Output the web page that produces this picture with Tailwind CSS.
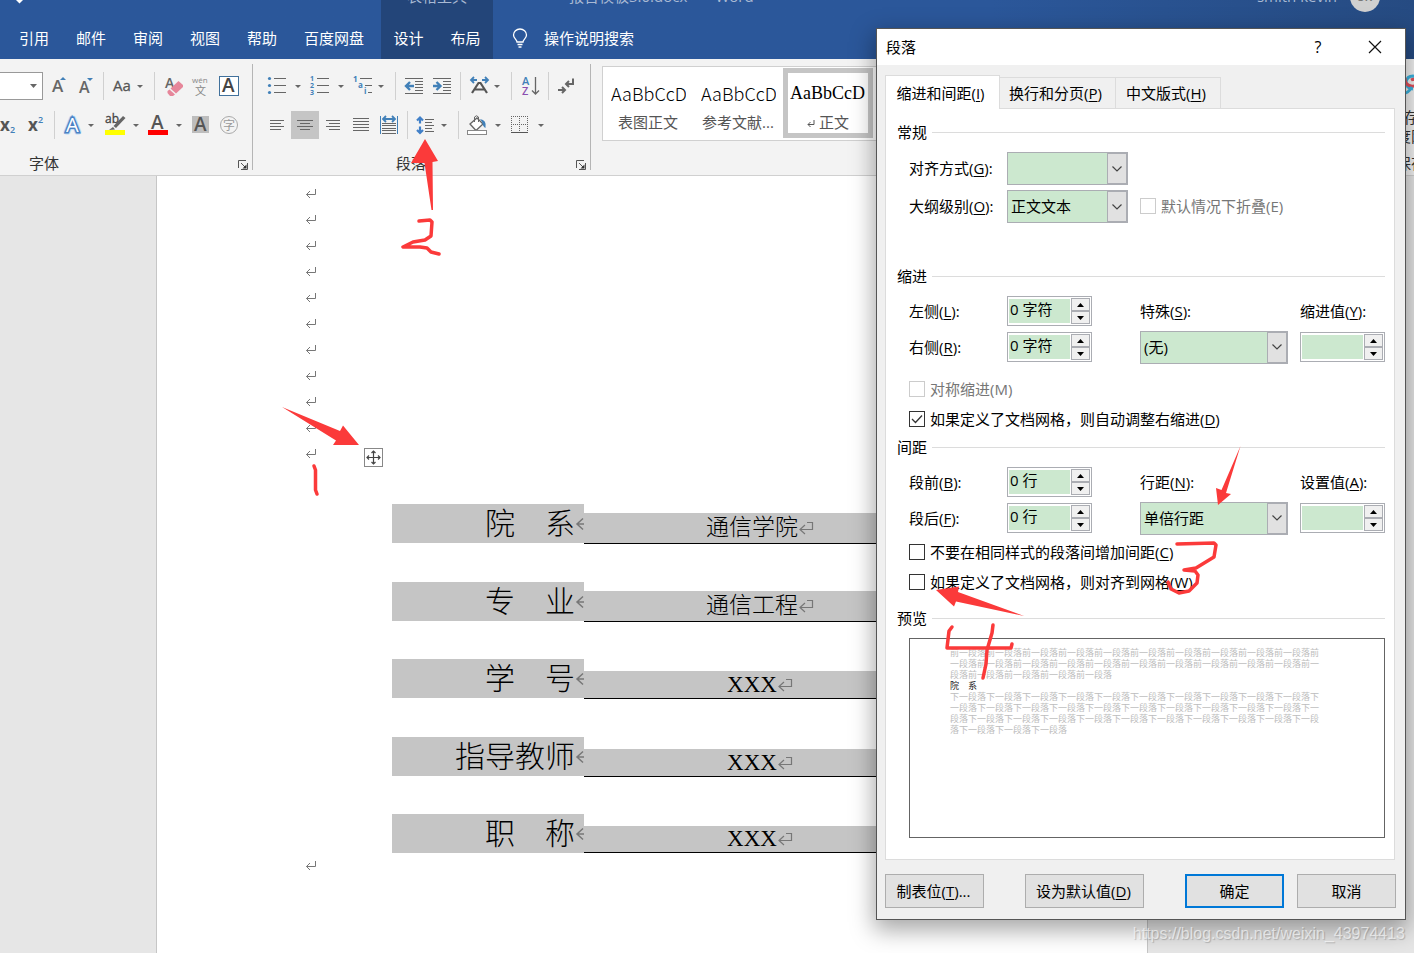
<!DOCTYPE html>
<html lang="zh-CN">
<head>
<meta charset="utf-8">
<title>报告模板3.0.docx - Word</title>
<script src="https://cdn.jsdelivr.net/npm/@tailwindcss/browser@4"></script>
</head>
<body class="relative flex h-screen flex-col overflow-hidden bg-[#e6e6e6] font-['Open_Sans','Noto_Sans_CJK_SC',sans-serif] text-[15px] leading-5 text-black">

<svg class="hidden" aria-hidden="true">
  <defs>
    <symbol id="mark" viewBox="0 0 12 12"><path d="M10.500 1V6.500H1.500M5 3L1.500 6.500L5 10" fill="none" stroke="#777" stroke-width="1"/></symbol>
    <symbol id="cellmark" viewBox="0 0 16 16"><path d="M9 2.500H14.500V9.500H2M7 5L2 9.500L7 14" fill="none" stroke="#777" stroke-width="1.200"/></symbol>
    <symbol id="cutmark" viewBox="0 0 9 16"><path d="M9 8H2M8 2.500L2 8L8 13.500" fill="none" stroke="#777" stroke-width="1.500"/></symbol>
    <symbol id="launcher" viewBox="0 0 10 10"><path d="M.500 8V.500H8M3 3L8 8M9.500 3V9.500H3" fill="none" stroke="#555"/><path d="M8.500 4.500V8.500H4.500Z" fill="#333"/></symbol>
    <symbol id="chev" viewBox="0 0 10 6"><path d="M.500 .500L5 5L9.500 .500" fill="none" stroke="#444" stroke-width="1.200"/></symbol>
    <symbol id="up" viewBox="0 0 7 4"><path d="M0 4L3.500 0L7 4Z"/></symbol>
    <symbol id="down" viewBox="0 0 7 4"><path d="M0 0L3.500 4L7 0Z"/></symbol>
  </defs>
</svg>

<header class="flex h-[59px] shrink-0 overflow-hidden bg-[#2b579a] bg-linear-to-r from-[#2b579a] from-70% to-[#264b82] text-white">
  <div class="flex w-[381px] flex-col">
    <div class="h-[18px] pl-[16px]"><svg class="h-1 w-[7px]" viewBox="0 0 7 4"><path d="M0 0H7L3.500 3.500Z" fill="#fff"/></svg></div>
    <nav class="flex gap-[27px] whitespace-nowrap pt-[10px] pl-[19px]">
      <a href="#">引用</a><a href="#">邮件</a><a href="#">审阅</a><a href="#">视图</a><a href="#">帮助</a><a href="#">百度网盘</a>
    </nav>
  </div>
  <div class="flex w-[112px] flex-col items-center bg-[#234579]">
    <div class="-mt-[14px] h-8 text-[#a9b9d3]">表格工具</div>
    <nav class="flex gap-[27px] pt-[10px]"><a href="#">设计</a><a href="#">布局</a></nav>
  </div>
  <div class="flex flex-1 flex-col">
    <div class="-mt-[14px] flex h-8 pr-[34px] pl-[76px] text-[#a9b9d3]">
      <span class="whitespace-pre">报告模板3.0.docx   -   Word</span>
      <span class="ml-auto">smith kevin</span>
      <span class="-mt-1 ml-[13px] size-[30px] rounded-full bg-[#d0d0d0] pt-[5px] text-center text-xs leading-5 font-semibold text-[#777]">SK</span>
    </div>
    <label class="flex items-center pt-[10px] pl-[19px]">
      <svg class="mr-[16px] h-5 w-4" viewBox="0 0 16 20" fill="none" stroke="#fff" stroke-width="1.300"><path d="M5 14C5 11.500 1.500 10.500 1.500 7A6.500 6 0 0 1 14.500 7C14.500 10.500 11 11.500 11 14ZM5.500 16.500H10.500M6.500 19H9.500"/></svg>
      <input class="w-40 bg-transparent text-[15px] leading-5 outline-none placeholder:text-white" placeholder="操作说明搜索" aria-label="操作说明搜索">
    </label>
  </div>
</header>

<section class="flex h-[117px] shrink-0 overflow-hidden border-b border-[#d0d0d0] bg-[#f3f3f3]" aria-label="功能区">
  <!-- 字体 -->
  <div class="relative flex w-[253px] shrink-0 flex-col pt-[13px]">
    <div class="flex h-7">
      <button aria-label="字号" class="flex w-[43px] items-center justify-end border border-l-0 border-[#999] bg-white pr-[5px]"><svg class="h-1 w-[7px] fill-[#666]"><use href="#down"/></svg></button>
      <button aria-label="增大字号"><svg width="29" height="28" viewBox="43 72 29 28"><text x="52" y="92" font-size="17" font-weight="600" fill="#666">A</text><path d="M60 80L63 77L66 80Z" fill="#4180b8"/></svg></button>
      <button aria-label="减小字号"><svg width="27" height="28" viewBox="72 72 27 28"><text x="79" y="93" font-size="16" font-weight="600" fill="#666">A</text><path d="M87 78H93L90 81Z" fill="#4180b8"/></svg></button>
      <span class="mx-1 w-px bg-[#d0d0d0]"></span>
      <button aria-label="更改大小写"><svg width="42" height="28" viewBox="108 72 42 28"><text x="113" y="91" font-size="15" fill="#555" stroke="#555" stroke-width=".3">Aa</text><path d="M137 85H143L140 88Z" fill="#666"/></svg></button>
      <span class="mx-1 w-px bg-[#d0d0d0]"></span>
      <button aria-label="清除格式"><svg width="28" height="28" viewBox="159 72 28 28"><text x="165" y="88" font-size="14" font-weight="600" fill="#666">A</text><path d="M178.500 81L183 85V87L176 93.500L170.500 88.500Z" fill="#e6869a"/><path d="M169.500 89.500L175 94.500L173 96H170L167.500 93V91Z" fill="#e6869a"/></svg></button>
      <button aria-label="拼音指南"><svg width="27" height="28" viewBox="187 72 27 28"><text x="192" y="83" font-size="8" fill="#888">wén</text><text x="195" y="95" font-size="11" fill="#888">文</text></svg></button>
      <button aria-label="字符边框"><svg width="30" height="28" viewBox="214 72 30 28"><rect x="219.500" y="76.500" width="19" height="19" fill="#fff" stroke="#41719c"/><text x="222" y="92" font-size="19" font-weight="600" fill="#444">A</text></svg></button>
    </div>
    <div class="mt-[11px] flex h-7">
      <button aria-label="下标"><svg width="22" height="28" viewBox="0 111 22 28"><text x="0" y="131" font-size="17" font-weight="700" fill="#555">x</text><text x="10" y="133" font-size="9" font-weight="600" fill="#4180b8">2</text></svg></button>
      <button aria-label="上标"><svg width="28" height="28" viewBox="22 111 28 28"><text x="28" y="131" font-size="17" font-weight="700" fill="#555">x</text><text x="38" y="123" font-size="9" font-weight="600" fill="#4180b8">2</text></svg></button>
      <span class="mx-1 w-px bg-[#d0d0d0]"></span>
      <button aria-label="文本效果"><svg width="40" height="28" viewBox="59 111 40 28"><text x="66" y="132" font-size="20" fill="#cfe0f5" stroke="#c4dcf5" stroke-width="5" stroke-linejoin="round">A</text><text x="66" y="132" font-size="20" fill="#fff" stroke="#4a82c4" stroke-width="3" paint-order="stroke">A</text><path d="M88 124H94L91 127Z" fill="#666"/></svg></button>
      <button aria-label="突出显示"><svg width="44" height="28" viewBox="99 111 44 28"><text x="105" y="123" font-size="12" fill="#444" stroke="#444" stroke-width=".3">ab</text><path d="M123 116L125.500 118L116 128L113.500 126Z" fill="#666"/><path d="M113 127L115 129.500L109 130Z" fill="#666"/><rect x="105" y="130" width="20" height="5" fill="#ff0"/><path d="M133 124H139L136 127Z" fill="#666"/></svg></button>
      <button aria-label="字体颜色"><svg width="43" height="28" viewBox="143 111 43 28"><text x="151" y="129" font-size="19" font-weight="600" fill="#555">A</text><rect x="148" y="130" width="20" height="5" fill="red"/><path d="M176 124H182L179 127Z" fill="#666"/></svg></button>
      <button aria-label="字符底纹"><svg width="28" height="28" viewBox="186 111 28 28"><rect x="192" y="116" width="17" height="17" fill="#bdbdbd"/><text x="194" y="131" font-size="19" font-weight="600" fill="#555">A</text></svg></button>
      <button aria-label="带圈字符"><svg width="30" height="28" viewBox="214 111 30 28"><circle cx="229" cy="125" r="8.500" fill="none" stroke="#aaa"/><text x="223" y="129.500" font-size="12" fill="#999">字</text></svg></button>
    </div>
    <div class="mt-[14px] flex items-center justify-between pr-[5px] pl-[29px]"><span class="text-[#333]">字体</span><button aria-label="字体设置"><svg class="mt-1 size-[10px]"><use href="#launcher"/></svg></button></div>
    <span class="absolute top-[5px] right-0 h-[106px] w-px bg-[#b5b5b5]"></span>
  </div>

  <!-- 段落 -->
  <div class="relative flex w-[338px] shrink-0 flex-col pt-[13px]">
    <div class="flex h-7 pl-[9px]">
      <button aria-label="项目符号"><svg width="43" height="28" viewBox="262 72 43 28"><g fill="#4180b8"><circle cx="269.500" cy="78.500" r="1.600"/><circle cx="269.500" cy="85.500" r="1.600"/><circle cx="269.500" cy="92.500" r="1.600"/></g><path d="M274 78.500H286M274 85.500H286M274 92.500H286" stroke="#666"/><path d="M295 85H301L298 88Z" fill="#666"/></svg></button>
      <button aria-label="编号"><svg width="43" height="28" viewBox="305 72 43 28"><g fill="#4180b8" font-size="7" font-weight="700"><text x="310" y="81">1</text><text x="310" y="88">2</text><text x="310" y="95">3</text></g><path d="M317 78.500H329M317 85.500H329M317 92.500H329" stroke="#666"/><path d="M338 85H344L341 88Z" fill="#666"/></svg></button>
      <button aria-label="多级列表"><svg width="43" height="28" viewBox="348 72 43 28"><g fill="#4180b8" font-size="8" font-weight="700"><text x="353" y="82">1</text><text x="358" y="88">a</text><text x="364" y="94">i</text></g><path d="M360 78.500H372M365 85.500H372M368 92.500H372" stroke="#666"/><path d="M378 85H384L381 88Z" fill="#666"/></svg></button>
      <span class="mx-1 w-px bg-[#d0d0d0]"></span>
      <button aria-label="减少缩进"><svg width="28" height="28" viewBox="400 72 28 28"><path d="M405 78.500H423M415 81.500H423M415 84.500H423M415 87.500H423M415 90.500H423M405 93.500H423" stroke="#666"/><path d="M414 86H407M410 82L406 86L410 90" fill="none" stroke="#4180b8" stroke-width="2.400"/></svg></button>
      <button aria-label="增加缩进"><svg width="28" height="28" viewBox="428 72 28 28"><path d="M433 78.500H451M443 81.500H451M443 84.500H451M443 87.500H451M443 90.500H451M433 93.500H451" stroke="#666"/><path d="M433 86H440M436.500 82L440.500 86L436.500 90" fill="none" stroke="#4180b8" stroke-width="2.400"/></svg></button>
      <span class="mx-1 w-px bg-[#d0d0d0]"></span>
      <button aria-label="中文版式"><svg width="42" height="28" viewBox="465 72 42 28"><path d="M472 93L478.500 83H480.500L487 93M475 89.500H484" fill="none" stroke="#555" stroke-width="2.200"/><path d="M477 80H471M474 77L471 80L474 83M482 80H488M485 77L488 80L485 83" fill="none" stroke="#4180b8" stroke-width="1.800"/><path d="M494 85H500L497 88Z" fill="#666"/></svg></button>
      <span class="mx-1 w-px bg-[#d0d0d0]"></span>
      <button aria-label="排序"><svg width="28" height="28" viewBox="516 72 28 28"><text x="522" y="85" font-size="11" font-weight="600" fill="#4180b8">A</text><text x="522" y="95" font-size="11" font-weight="600" fill="#8a4fb0">Z</text><path d="M535.500 77V94M532 90.500L535.500 94L539 90.500" fill="none" stroke="#666" stroke-width="1.300"/></svg></button>
      <span class="mx-1 w-px bg-[#d0d0d0]"></span>
      <button aria-label="显示编辑标记"><svg width="27" height="28" viewBox="553 72 27 28"><path d="M573 78.500V84H566M569 81L566 84L569 87M558 90H565M562 87L565 90L562 93" fill="none" stroke="#666" stroke-width="2"/></svg></button>
    </div>
    <div class="mt-[11px] flex h-7 pl-[10px]">
      <button aria-label="左对齐"><svg width="28" height="28" viewBox="263 111 28 28"><path d="M270 120.500H284M270 123.500H281M270 126.500H284M270 129.500H281" stroke="#666"/></svg></button>
      <button aria-label="居中" aria-pressed="true" class="bg-[#c5c5c5]"><svg width="28" height="28" viewBox="291 111 28 28"><path d="M297 120.500H313M300 123.500H310M297 126.500H313M300 129.500H310" stroke="#666"/></svg></button>
      <button aria-label="右对齐"><svg width="28" height="28" viewBox="319 111 28 28"><path d="M326 120.500H340M329 123.500H340M326 126.500H340M329 129.500H340" stroke="#666"/></svg></button>
      <button aria-label="两端对齐"><svg width="28" height="28" viewBox="347 111 28 28"><path d="M353 118.500H369M353 121.500H369M353 124.500H369M353 127.500H369M353 130.500H369" stroke="#666"/></svg></button>
      <button aria-label="分散对齐"><svg width="28" height="28" viewBox="375 111 28 28"><path d="M380.500 116V134M397.500 116V134" stroke="#4180b8"/><path d="M383 119H395M386 116L383 119L386 122M392 116L395 119L392 122" fill="none" stroke="#4180b8" stroke-width="1.800"/><path d="M382 123.500H396M382 125.500H396M382 128.500H396M382 130.500H396M382 133.500H396" stroke="#666"/></svg></button>
      <span class="mx-1 w-px bg-[#d0d0d0]"></span>
      <button aria-label="行和段落间距"><svg width="42" height="28" viewBox="412 111 42 28"><path d="M420 117V123.500M417 120.500L420 117.500L423 120.500M420 126.500V133M417 130L420 133L423 130" fill="none" stroke="#4180c8" stroke-width="2.200"/><path d="M425 119.500H434M425 122.500H432M425 125.500H434M425 128.500H432M425 131.500H434" stroke="#666"/><path d="M441 124H447L444 127Z" fill="#666"/></svg></button>
      <span class="mx-1 w-px bg-[#d0d0d0]"></span>
      <button aria-label="底纹"><svg width="43" height="28" viewBox="463 111 43 28"><path d="M470 124L477 118L483 124L476 130.500Z" fill="#fff" stroke="#666" stroke-width="1.300"/><path d="M474.500 122V117Q476.500 114.500 478.500 117V122" fill="none" stroke="#666"/><path d="M480 119Q487 120 485.500 128Q483 127 482 122Z" fill="#4180b8"/><rect x="467.500" y="130.500" width="19" height="4" fill="#fff" stroke="#888"/><path d="M495 124H501L498 127Z" fill="#666"/></svg></button>
      <button aria-label="边框"><svg width="42" height="28" viewBox="506 111 42 28"><path d="M511.500 116V132M511 116.500H528M527.500 116V132M519.500 116V132M511 124.500H528" stroke="#666" stroke-dasharray="1 1" fill="none"/><path d="M511 132.500H528" stroke="#555"/><path d="M538 124H544L541 127Z" fill="#666"/></svg></button>
    </div>
    <div class="mt-[14px] flex items-center justify-between pr-[5px] pl-[143px]"><span class="text-[#333]">段落</span><button aria-label="段落设置"><svg class="mt-1 size-[10px]"><use href="#launcher"/></svg></button></div>
    <span class="absolute top-[5px] right-0 h-[106px] w-px bg-[#b5b5b5]"></span>
  </div>

  <!-- 样式 -->
  <div class="mt-[7px] ml-[11px] flex h-[75px] flex-1 border border-[#d0d0d0] bg-white text-[#555]">
    <button class="flex w-[90px] flex-col px-2 pt-[16px] text-left"><span class="w-[75px] overflow-hidden font-['Noto_Sans_CJK_SC',sans-serif] text-[18px] font-light whitespace-nowrap text-black">AaBbCcDd</span><span class="mt-[9px] w-full text-center">表图正文</span></button>
    <button class="flex w-[90px] flex-col px-2 pt-[16px] text-left"><span class="w-[75px] overflow-hidden font-['Noto_Sans_CJK_SC',sans-serif] text-[18px] font-light whitespace-nowrap text-black">AaBbCcDd</span><span class="mt-[9px] w-full text-center whitespace-nowrap">参考文献...</span></button>
    <button class="mt-px flex h-[70px] w-[90px] flex-col border-5 border-[#c5c5c5] px-[2px] pt-[10px] text-left"><span class="w-[75px] overflow-hidden font-['Liberation_Serif',serif] text-[18px] whitespace-nowrap text-black">AaBbCcDd</span><span class="mt-[9px] flex w-full items-center justify-center gap-1"><svg class="mt-1 size-2" viewBox="0 0 8 8"><path d="M7 0V4.500H1M3.500 2L1 4.500L3.500 7" fill="none" stroke="#555"/></svg>正文</span></button>
  </div>

  <!-- 百度网盘 -->
  <div class="-mr-[27px] ml-auto flex w-[60px] shrink-0 flex-col items-center pt-[14px] text-center whitespace-nowrap text-[#333]">
    <button class="flex flex-col items-center leading-[19px]"><svg class="h-6 w-[26px]" viewBox="0 0 26 24" fill="none" stroke-width="3"><path d="M15 16Q8 15 8 9Q9 3 15 3Q21 4 21 9" stroke="#3cb6e3"/><path d="M7 5Q7 12 13 13Q19 14 19 9Q17 5 13 7" stroke="#e8505b"/><path d="M14 14Q10 20 7 20Q5 20 5 17" stroke="#3cb6e3"/></svg><span class="mt-[11px]">保存到</span><span>百度网盘</span></button>
    <span class="mt-[7px]">保存</span>
  </div>
</section>

<main class="flex min-h-0 flex-1 overflow-hidden">
  <article class="relative mr-[266px] ml-[156px] flex-1 border-x border-[#c6c6c6] bg-white pt-[5px] pl-[148px]">
    <div class="[&>p]:flex [&>p]:h-[26px] [&>p]:items-center">
      <p><svg class="size-3"><use href="#mark"/></svg></p><p><svg class="size-3"><use href="#mark"/></svg></p><p><svg class="size-3"><use href="#mark"/></svg></p><p><svg class="size-3"><use href="#mark"/></svg></p><p><svg class="size-3"><use href="#mark"/></svg></p><p><svg class="size-3"><use href="#mark"/></svg></p><p><svg class="size-3"><use href="#mark"/></svg></p><p><svg class="size-3"><use href="#mark"/></svg></p><p><svg class="size-3"><use href="#mark"/></svg></p><p><svg class="size-3"><use href="#mark"/></svg></p><p><svg class="size-3"><use href="#mark"/></svg></p>
    </div>
    <button aria-label="移动表格" class="absolute top-[272px] left-[207px]"><svg width="19" height="19" viewBox="0 0 19 19" fill="none"><rect x=".500" y=".500" width="18" height="18" fill="#fff" stroke="#888"/><path d="M9.500 3V16M3 9.500H16M7.500 5L9.500 3L11.500 5M7.500 14L9.500 16L11.500 14M5 7.500L3 9.500L5 11.500M14 7.500L16 9.500L14 11.500" stroke="#444" stroke-width="1.200"/></svg></button>
    <table class="mt-[37px] ml-[87px] w-[544px] table-fixed border-collapse font-['Liberation_Serif','Noto_Sans_CJK_SC',serif] font-light">
      <colgroup><col class="w-[192px]"><col></colgroup>
      <tbody class="align-top">
        <tr class="h-[78px]"><th class="p-0 font-light"><div class="flex h-[39px] items-center justify-end bg-[#c5c5c5] text-[30px]">院　系<svg class="h-4 w-[9px]"><use href="#cutmark"/></svg></div></th><td class="p-0 pt-[9px]"><div class="flex h-[31px] items-center justify-center border-b border-black bg-[#c5c5c5] text-[23px]">通信学院<svg class="size-4"><use href="#cellmark"/></svg></div></td></tr>
        <tr class="h-[77px]"><th class="p-0 font-light"><div class="flex h-[39px] items-center justify-end bg-[#c5c5c5] text-[30px]">专　业<svg class="h-4 w-[9px]"><use href="#cutmark"/></svg></div></th><td class="p-0 pt-[9px]"><div class="flex h-[31px] items-center justify-center border-b border-black bg-[#c5c5c5] text-[23px]">通信工程<svg class="size-4"><use href="#cellmark"/></svg></div></td></tr>
        <tr class="h-[78px]"><th class="p-0 font-light"><div class="flex h-[39px] items-center justify-end bg-[#c5c5c5] text-[30px]">学　号<svg class="h-4 w-[9px]"><use href="#cutmark"/></svg></div></th><td class="p-0 pt-3"><div class="flex h-7 items-center justify-center border-b border-black bg-[#c5c5c5] text-[23px]">XXX<svg class="size-4"><use href="#cellmark"/></svg></div></td></tr>
        <tr class="h-[77px]"><th class="p-0 font-light"><div class="flex h-[39px] items-center justify-end bg-[#c5c5c5] text-[30px]">指导教师<svg class="h-4 w-[9px]"><use href="#cutmark"/></svg></div></th><td class="p-0 pt-3"><div class="flex h-7 items-center justify-center border-b border-black bg-[#c5c5c5] text-[23px]">XXX<svg class="size-4"><use href="#cellmark"/></svg></div></td></tr>
        <tr><th class="p-0 font-light"><div class="flex h-[39px] items-center justify-end bg-[#c5c5c5] text-[30px]">职　称<svg class="h-4 w-[9px]"><use href="#cutmark"/></svg></div></th><td class="p-0 pt-3"><div class="flex h-[27px] items-center justify-center border-b border-black bg-[#c5c5c5] text-[23px]">XXX<svg class="size-4"><use href="#cellmark"/></svg></div></td></tr>
      </tbody>
    </table>
    <p class="flex h-[26px] items-center"><svg class="size-3"><use href="#mark"/></svg></p>
  </article>
</main>

<!-- 段落对话框 -->
<div role="dialog" aria-labelledby="dlg" class="absolute top-7 right-2 w-[530px] border border-[#555] bg-[#f0f0f0] shadow-[0_8px_22px_2px_rgba(0,0,0,0.35)]">
  <div class="flex h-9 items-center bg-white pb-px pl-[9px]">
    <h1 id="dlg">段落</h1>
    <button class="ml-auto w-8 text-base" aria-label="帮助">?</button>
    <button class="mr-[23px] ml-[34px] flex size-[14px]" aria-label="关闭"><svg viewBox="0 0 14 14" class="size-full"><path d="M1 1L13 13M13 1L1 13" stroke="#111" stroke-width="1.200"/></svg></button>
  </div>
  <div class="flex items-end pt-[10px] pl-2" role="tablist">
    <button role="tab" aria-selected="true" class="relative -mb-px h-[34px] w-[115px] border border-b-0 border-[#dcdcdc] bg-white pr-1">缩进和间距(<u class="underline-offset-2">I</u>)</button>
    <button role="tab" class="-ml-px h-[31px] w-[117px] border border-b-0 border-[#dcdcdc] pr-1">换行和分页(<u class="underline-offset-2">P</u>)</button>
    <button role="tab" class="-ml-px h-[31px] w-[106px] border border-b-0 border-[#dcdcdc] pr-1">中文版式(<u class="underline-offset-2">H</u>)</button>
  </div>
  <div class="mr-[10px] ml-2 border border-[#dcdcdc] bg-white pt-[11px] pr-[9px] pb-[21px] pl-[11px]">
    <h2 class="flex h-6 items-center gap-[5px] after:h-px after:flex-1 after:bg-[#dcdcdc]">常规</h2>
    <div class="mt-2 flex flex-col gap-[5px] pl-3">
      <div class="flex items-center">
        <label for="align" class="w-[98px] pb-[2px]">对齐方式(<u class="underline-offset-2">G</u>):</label>
        <span class="relative h-[33px] w-[121px]"><select id="align" class="size-full appearance-none border border-[#abadb3] bg-[#cce8cf] pb-[2px] pl-[3px]"><option></option></select><span class="pointer-events-none absolute inset-y-px right-px flex w-5 items-center justify-center border border-[#abadb3] bg-[#e1e1e1]"><svg class="h-[6px] w-[10px]"><use href="#chev"/></svg></span></span>
      </div>
      <div class="flex items-center">
        <label for="level" class="w-[98px] pb-[2px]">大纲级别(<u class="underline-offset-2">O</u>):</label>
        <span class="relative h-[33px] w-[121px]"><select id="level" class="size-full appearance-none border border-[#abadb3] bg-[#cce8cf] pb-[2px] pl-[3px]"><option>正文文本</option></select><span class="pointer-events-none absolute inset-y-px right-px flex w-5 items-center justify-center border border-[#abadb3] bg-[#e1e1e1]"><svg class="h-[6px] w-[10px]"><use href="#chev"/></svg></span></span>
        <label class="ml-3 flex items-center gap-[5px] pb-[2px] text-[#767676]"><input type="checkbox" disabled class="size-4 appearance-none border border-[#ccc] bg-white">默认情况下折叠(E)</label>
      </div>
    </div>

    <h2 class="mt-[41px] flex h-6 items-center gap-[5px] after:h-px after:flex-1 after:bg-[#dcdcdc]">缩进</h2>
    <div class="mt-[5px] grid auto-rows-[36px] grid-cols-[98px_133px_1fr_85px] items-center pl-3">
      <label for="left">左侧(<u class="underline-offset-2">L</u>):</label>
      <span class="flex h-[30px] w-[85px] border border-[#abadb3] p-px"><input id="left" value="0 字符" class="my-px mr-px w-0 flex-1 bg-[#cce8cf] pb-1 pl-px"><span class="flex w-[19px] flex-col"><button aria-label="增加" class="flex flex-1 items-center justify-center border border-[#abadb3] bg-[#f0f0f0]"><svg class="h-1 w-[7px]"><use href="#up"/></svg></button><button aria-label="减少" class="flex flex-1 items-center justify-center border border-[#abadb3] bg-[#f0f0f0]"><svg class="h-1 w-[7px]"><use href="#down"/></svg></button></span></span>
      <label for="special">特殊(<u class="underline-offset-2">S</u>):</label>
      <label for="by">缩进值(<u class="underline-offset-2">Y</u>):</label>
      <label for="right">右侧(<u class="underline-offset-2">R</u>):</label>
      <span class="flex h-[30px] w-[85px] border border-[#abadb3] p-px"><input id="right" value="0 字符" class="my-px mr-px w-0 flex-1 bg-[#cce8cf] pb-1 pl-px"><span class="flex w-[19px] flex-col"><button aria-label="增加" class="flex flex-1 items-center justify-center border border-[#abadb3] bg-[#f0f0f0]"><svg class="h-1 w-[7px]"><use href="#up"/></svg></button><button aria-label="减少" class="flex flex-1 items-center justify-center border border-[#abadb3] bg-[#f0f0f0]"><svg class="h-1 w-[7px]"><use href="#down"/></svg></button></span></span>
      <span class="relative mr-3 h-[33px]"><select id="special" class="size-full appearance-none border border-[#abadb3] bg-[#cce8cf] pl-[3px]"><option>(无)</option></select><span class="pointer-events-none absolute inset-y-px right-px flex w-5 items-center justify-center border border-[#abadb3] bg-[#e1e1e1]"><svg class="h-[6px] w-[10px]"><use href="#chev"/></svg></span></span>
      <span class="flex h-[30px] w-[85px] border border-[#abadb3] p-px"><input id="by" class="my-px mr-px w-0 flex-1 bg-[#cce8cf] pb-1 pl-px"><span class="flex w-[19px] flex-col"><button aria-label="增加" class="flex flex-1 items-center justify-center border border-[#abadb3] bg-[#f0f0f0]"><svg class="h-1 w-[7px]"><use href="#up"/></svg></button><button aria-label="减少" class="flex flex-1 items-center justify-center border border-[#abadb3] bg-[#f0f0f0]"><svg class="h-1 w-[7px]"><use href="#down"/></svg></button></span></span>
    </div>
    <div class="mt-[9px] pl-3">
      <label class="flex h-[30px] items-center gap-[5px] text-[#767676]"><input type="checkbox" disabled class="size-4 appearance-none border border-[#ccc] bg-white">对称缩进(M)</label>
      <label class="relative flex h-[30px] items-center gap-[5px]"><input type="checkbox" checked class="peer size-4 appearance-none border border-[#333] bg-white"><svg class="pointer-events-none absolute left-0 hidden size-4 peer-checked:block" viewBox="0 0 16 16"><path d="M3 8L6.500 11.500L13 4.500" fill="none" stroke="#333" stroke-width="1.300"/></svg><span>如果定义了文档网格，则自动调整右缩进(<u class="underline-offset-2">D</u>)</span></label>
    </div>

    <h2 class="mt-px flex h-6 items-center gap-[5px] after:h-px after:flex-1 after:bg-[#dcdcdc]">间距</h2>
    <div class="mt-[5px] grid auto-rows-[36px] grid-cols-[98px_133px_1fr_85px] items-center pl-3">
      <label for="before">段前(<u class="underline-offset-2">B</u>):</label>
      <span class="flex h-[30px] w-[85px] border border-[#abadb3] p-px"><input id="before" value="0 行" class="my-px mr-px w-0 flex-1 bg-[#cce8cf] pb-1 pl-px"><span class="flex w-[19px] flex-col"><button aria-label="增加" class="flex flex-1 items-center justify-center border border-[#abadb3] bg-[#f0f0f0]"><svg class="h-1 w-[7px]"><use href="#up"/></svg></button><button aria-label="减少" class="flex flex-1 items-center justify-center border border-[#abadb3] bg-[#f0f0f0]"><svg class="h-1 w-[7px]"><use href="#down"/></svg></button></span></span>
      <label for="spacing">行距(<u class="underline-offset-2">N</u>):</label>
      <label for="at">设置值(<u class="underline-offset-2">A</u>):</label>
      <label for="after">段后(<u class="underline-offset-2">F</u>):</label>
      <span class="flex h-[30px] w-[85px] border border-[#abadb3] p-px"><input id="after" value="0 行" class="my-px mr-px w-0 flex-1 bg-[#cce8cf] pb-1 pl-px"><span class="flex w-[19px] flex-col"><button aria-label="增加" class="flex flex-1 items-center justify-center border border-[#abadb3] bg-[#f0f0f0]"><svg class="h-1 w-[7px]"><use href="#up"/></svg></button><button aria-label="减少" class="flex flex-1 items-center justify-center border border-[#abadb3] bg-[#f0f0f0]"><svg class="h-1 w-[7px]"><use href="#down"/></svg></button></span></span>
      <span class="relative mr-3 h-[33px]"><select id="spacing" class="size-full appearance-none border border-[#abadb3] bg-[#cce8cf] pl-[3px]"><option>单倍行距</option></select><span class="pointer-events-none absolute inset-y-px right-px flex w-5 items-center justify-center border border-[#abadb3] bg-[#e1e1e1]"><svg class="h-[6px] w-[10px]"><use href="#chev"/></svg></span></span>
      <span class="flex h-[30px] w-[85px] border border-[#abadb3] p-px"><input id="at" class="my-px mr-px w-0 flex-1 bg-[#cce8cf] pb-1 pl-px"><span class="flex w-[19px] flex-col"><button aria-label="增加" class="flex flex-1 items-center justify-center border border-[#abadb3] bg-[#f0f0f0]"><svg class="h-1 w-[7px]"><use href="#up"/></svg></button><button aria-label="减少" class="flex flex-1 items-center justify-center border border-[#abadb3] bg-[#f0f0f0]"><svg class="h-1 w-[7px]"><use href="#down"/></svg></button></span></span>
    </div>
    <div class="mt-px pl-3">
      <label class="flex h-[30px] items-center gap-[5px]"><input type="checkbox" class="size-4 appearance-none border border-[#333] bg-white"><span>不要在相同样式的段落间增加间距(<u class="underline-offset-2">C</u>)</span></label>
      <label class="flex h-[30px] items-center gap-[5px]"><input type="checkbox" class="size-4 appearance-none border border-[#333] bg-white"><span>如果定义了文档网格，则对齐到网格(<u class="underline-offset-2">W</u>)</span></label>
    </div>

    <h2 class="mt-[9px] flex h-6 items-center gap-[5px] after:h-px after:flex-1 after:bg-[#dcdcdc]">预览</h2>
    <div class="mt-2 ml-3 h-[200px] border border-[#646464] pt-2 pl-10 text-[9px] leading-[11px] text-[#bdbdbd]">
      <p class="w-[370px] break-all">前一段落前一段落前一段落前一段落前一段落前一段落前一段落前一段落前一段落前一段落前一段落前一段落前一段落前一段落前一段落前一段落前一段落前一段落前一段落前一段落前一段落前一段落前一段落前一段落前一段落</p>
      <p class="text-[#222]">院　系</p>
      <p class="w-[370px] break-all">下一段落下一段落下一段落下一段落下一段落下一段落下一段落下一段落下一段落下一段落下一段落下一段落下一段落下一段落下一段落下一段落下一段落下一段落下一段落下一段落下一段落下一段落下一段落下一段落下一段落下一段落下一段落下一段落下一段落下一段落下一段落下一段落下一段落下一段落</p>
    </div>
  </div>
  <div class="flex pt-[14px] pr-[9px] pb-[11px] pl-2">
    <button class="h-[34px] w-[99px] border border-[#adadad] bg-[#e1e1e1] pr-[2px]">制表位(<u class="underline-offset-2">T</u>)...</button>
    <button class="ml-[41px] h-[34px] w-[119px] border border-[#adadad] bg-[#e1e1e1] pr-[2px]">设为默认值(<u class="underline-offset-2">D</u>)</button>
    <button class="ml-auto h-[34px] w-[99px] border-2 border-[#0078d7] bg-[#e1e1e1]">确定</button>
    <button class="ml-[13px] h-[34px] w-[99px] border border-[#adadad] bg-[#e1e1e1]">取消</button>
  </div>
</div>

<!-- 手绘标注 -->
<svg class="pointer-events-none absolute top-0 left-0" width="1414" height="953" viewBox="0 0 1414 953" aria-hidden="true">
  <g fill="#fb3a3a">
    <path d="M425 139L438 161L432.500 162L433 210H431.500L424.500 163L411 163Z"/>
    <path d="M282 407L340 431L343 425.500L359 445H333L336 440.500Z"/>
    <path d="M1240.500 446L1226 493L1231 494L1218 505L1216 488L1221.500 490Z"/>
    <path d="M936 590L959 586.500L958 592L1024 616L956 601.500L954 606.500Z"/>
  </g>
  <g fill="none" stroke="#fb3a3a" stroke-width="3.500" stroke-linecap="round" stroke-linejoin="round">
    <path d="M314 466L315.500 470V490L317 494"/>
    <path d="M419 221L430 220L432 222L431 236L425 240L413 242L403 247L420 247L427 248L431 252L439 254"/>
    <path d="M1177 544L1214 543L1216 545L1214 557L1196 568L1184 570L1195 571L1198 575L1197 583L1189 591L1179 593L1171 589L1168 582"/>
    <path d="M952 627L949 631L947 648H1011L1012 644"/>
    <path d="M993 625L992 633L987 650L986 664L983 678"/>
  </g>
</svg>
<div class="pointer-events-none absolute right-[9px] bottom-[7px] font-['Liberation_Sans',sans-serif] text-base text-white/60 [text-shadow:1px_1px_1px_rgba(0,0,0,0.2)]">https://blog.csdn.net/weixin_43974413</div>
</body>
</html>
